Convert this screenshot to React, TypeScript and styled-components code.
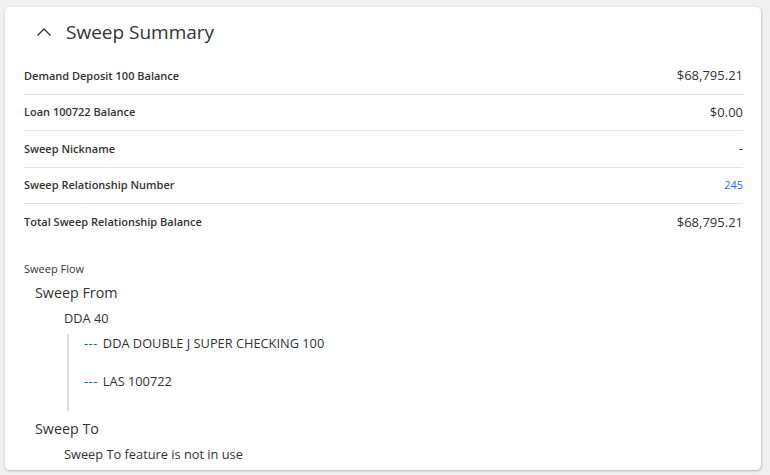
import React from 'react';
import styled, { createGlobalStyle } from 'styled-components';

const GlobalStyle = createGlobalStyle`
  html, body {
    margin: 0;
    padding: 0;
    background: #f0f0f0;
    font-family: "Open Sans", "Noto Sans", sans-serif;
    color: #333;
  }
`;

const Page = styled.div`
  width: 770px;
  height: 475px;
  padding: 7px 9px 0 5px;
  box-sizing: border-box;
`;

const Card = styled.section`
  background: #fff;
  border-radius: 5px;
  box-shadow: 0 1px 3px rgba(0, 0, 0, 0.18), 1px 1px 2px rgba(0, 0, 0, 0.08);
  height: 463px;
  padding: 0 18px 0 19px;
  box-sizing: border-box;
  overflow: hidden;
`;

const Header = styled.div`
  display: flex;
  align-items: center;
  gap: 14px;
  height: 51px;
  padding-left: 12px;
  padding-bottom: 1px;
  box-sizing: border-box;
`;

const Title = styled.h2`
  margin: 0;
  font-size: 19px;
  font-weight: 400;
  color: #333;
`;

const Rows = styled.div`
  display: flex;
  flex-direction: column;
`;

const Row = styled.div<{ $last?: boolean }>`
  display: flex;
  justify-content: space-between;
  align-items: center;
  height: 36.5px;
  padding-bottom: 1px;
  border-bottom: ${(p) => (p.$last ? 'none' : '1px solid #e2e2e2')};
  box-sizing: border-box;
`;

const Label = styled.span`
  font-size: 11px;
  font-weight: 600;
  color: #333;
`;

const Value = styled.span<{ $link?: boolean }>`
  font-size: ${(p) => (p.$link ? '11px' : '13px')};
  color: ${(p) => (p.$link ? '#2f6fd6' : '#333')};
`;

const Flow = styled.div`
  margin-top: 20px;
`;

const FlowCaption = styled.div`
  font-size: 11px;
  color: #333;
  margin-bottom: 7px;
`;

const SectionTitle = styled.div`
  font-size: 14.3px;
  padding-left: 11px;
  line-height: 20px;
`;

const Account = styled.div`
  font-size: 12.8px;
  padding-left: 40px;
  margin-top: 5px;
  line-height: 20px;
`;

const Branch = styled.div`
  margin-left: 43px;
  margin-top: 6px;
  border-left: 2px solid #dcdcdc;
  padding: 0 0 0 15px;
  display: flex;
  flex-direction: column;
  gap: 18px;
  height: 77px;
  box-sizing: border-box;
`;

const Leaf = styled.div`
  font-size: 12.8px;
  line-height: 20px;
  &:first-child {
    margin-top: -1px;
  }
`;

const Dash = styled.span`
  color: #2456b8;
  margin-right: 5px;
  letter-spacing: 0.5px;
`;

const Note = styled.div`
  font-size: 12.8px;
  padding-left: 40px;
  margin-top: 5px;
  line-height: 20px;
`;

const SweepToTitle = styled(SectionTitle)`
  margin-top: 8px;
`;

const Chevron = () => (
  <svg width="16" height="10" viewBox="0 0 16 10" fill="none">
    <path d="M1.5 8.5 L8 2 L14.5 8.5" stroke="#333" strokeWidth="1.3" />
  </svg>
);

const rows = [
  { label: 'Demand Deposit 100 Balance', value: '$68,795.21' },
  { label: 'Loan 100722 Balance', value: '$0.00' },
  { label: 'Sweep Nickname', value: '-' },
  { label: 'Sweep Relationship Number', value: '245', link: true },
  { label: 'Total Sweep Relationship Balance', value: '$68,795.21' },
];

export default function App() {
  return (
    <Page>
      <GlobalStyle />
      <Card>
        <Header>
          <Chevron />
          <Title>Sweep Summary</Title>
        </Header>
        <Rows>
          {rows.map((r, i) => (
            <Row key={r.label} $last={i === rows.length - 1}>
              <Label>{r.label}</Label>
              <Value $link={r.link}>{r.value}</Value>
            </Row>
          ))}
        </Rows>
        <Flow>
          <FlowCaption>Sweep Flow</FlowCaption>
          <SectionTitle>Sweep From</SectionTitle>
          <Account>DDA 40</Account>
          <Branch>
            <Leaf><Dash>---</Dash>DDA DOUBLE J SUPER CHECKING 100</Leaf>
            <Leaf><Dash>---</Dash>LAS 100722</Leaf>
          </Branch>
          <SweepToTitle>Sweep To</SweepToTitle>
          <Note>Sweep To feature is not in use</Note>
        </Flow>
      </Card>
    </Page>
  );
}
